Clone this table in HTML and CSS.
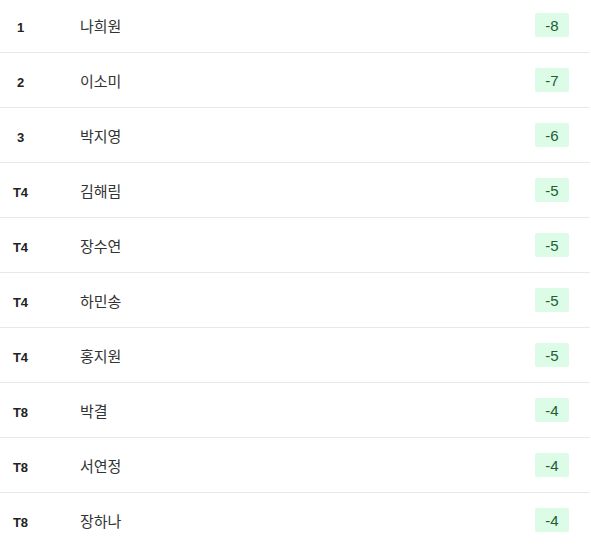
FILE: index.html
```html
<!DOCTYPE html>
<html lang="ko">
<head>
<meta charset="utf-8">
<link rel="stylesheet" href="styles.css">
</head>
<body>
<div class="board">
  <div class="row"><span class="rank">1</span><span class="name">나희원</span><span class="score">-8</span></div>
  <div class="row"><span class="rank">2</span><span class="name">이소미</span><span class="score">-7</span></div>
  <div class="row"><span class="rank">3</span><span class="name">박지영</span><span class="score">-6</span></div>
  <div class="row"><span class="rank">T4</span><span class="name">김해림</span><span class="score">-5</span></div>
  <div class="row"><span class="rank">T4</span><span class="name">장수연</span><span class="score">-5</span></div>
  <div class="row"><span class="rank">T4</span><span class="name">하민송</span><span class="score">-5</span></div>
  <div class="row"><span class="rank">T4</span><span class="name">홍지원</span><span class="score">-5</span></div>
  <div class="row"><span class="rank">T8</span><span class="name">박결</span><span class="score">-4</span></div>
  <div class="row"><span class="rank">T8</span><span class="name">서연정</span><span class="score">-4</span></div>
  <div class="row"><span class="rank">T8</span><span class="name">장하나</span><span class="score">-4</span></div>
</div>
</body>
</html>
```
FILE: styles.css
```css
html, body {
  margin: 0;
  padding: 0;
  background: #fff;
  overflow: hidden;
}
body {
  font-family: "Noto Sans CJK KR", "Noto Sans", sans-serif;
  color: #222;
}
.board {
  width: 590px;
  margin-top: -2px;
}
.row {
  display: flex;
  align-items: center;
  height: 54px;
  border-bottom: 1px solid #e8e8e8;
}
.rank {
  width: 41px;
  padding-top: 4px;
  text-align: center;
  font-family: "Liberation Sans", sans-serif;
  font-weight: bold;
  font-size: 13px;
  color: #222;
}
.name {
  margin-left: 39px;
  flex: 1;
  font-size: 15px;
  color: #333;
}
.score {
  margin-right: 21px;
  width: 34px;
  height: 24px;
  line-height: 25px;
  text-align: center;
  background: #dcfce7;
  color: #1e5e33;
  font-family: "Liberation Sans", sans-serif;
  font-size: 15px;
  border-radius: 2px;
}
```
